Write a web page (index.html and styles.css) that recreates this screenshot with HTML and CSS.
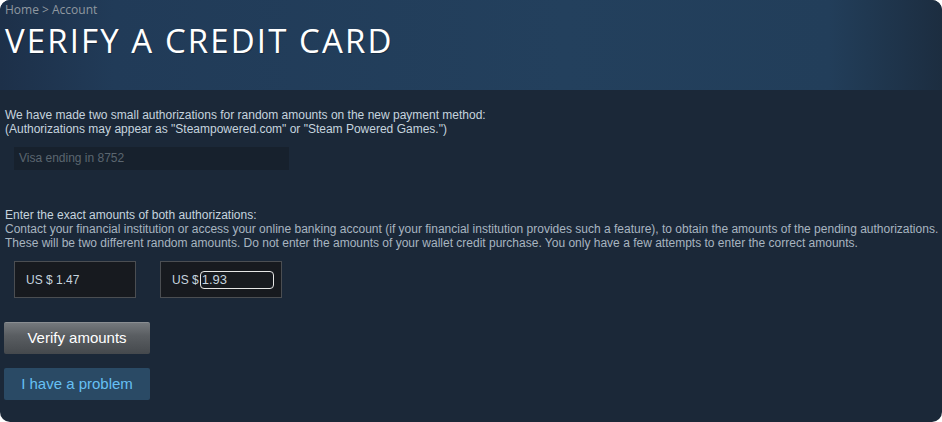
FILE: index.html
```html
<!DOCTYPE html>
<html>
<head>
<meta charset="utf-8">
<link rel="stylesheet" href="styles.css">
</head>
<body>
<div class="page">
  <div class="header">
    <div class="crumbs"><span>Home</span> &gt; <span>Account</span></div>
    <h1 class="title">VERIFY A CREDIT CARD</h1>
  </div>
  <div class="content">
    <p class="intro">We have made two small authorizations for random amounts on the new payment method:<br>(Authorizations may appear as "Steampowered.com" or "Steam Powered Games.")</p>
    <div class="card-field">Visa ending in 8752</div>
    <p class="instr"><span class="lead">Enter the exact amounts of both authorizations:</span><br>Contact your financial institution or access your online banking account (if your financial institution provides such a feature), to obtain the amounts of the pending authorizations.<br>These will be two different random amounts. Do not enter the amounts of your wallet credit purchase. You only have a few attempts to enter the correct amounts.</p>
    <div class="amounts">
      <div class="amount">US $ 1.47</div>
      <div class="amount">US $<span class="amount-input">1.93</span></div>
    </div>
    <div class="btn btn-verify">Verify amounts</div>
    <div class="btn btn-problem">I have a problem</div>
  </div>
</div>
</body>
</html>
```
FILE: styles.css
```css
html, body {
  margin: 0;
  padding: 0;
  background: #ffffff;
}
.page {
  width: 942px;
  height: 422px;
  background: #1b2838;
  border-radius: 10px;
  overflow: hidden;
  font-family: "Liberation Sans", Arial, sans-serif;
}
.header {
  height: 90px;
  background: linear-gradient(to right, #1d3049 0%, #213b58 12%, #23405d 60%, #223e5a 88%, #1c2d40 100%);
  box-sizing: border-box;
  padding: 2px 5px 0;
}
.crumbs {
  font-family: "Open Sans", sans-serif;
  font-size: 12px;
  line-height: 16px;
  color: #8f98a0;
}
.title {
  margin: 3px 0 0;
  font-family: "Open Sans", sans-serif;
  font-weight: 400;
  font-size: 33px;
  line-height: 40px;
  letter-spacing: 2.1px;
  color: #ffffff;
  text-shadow: 1px 1px 0 rgba(0,0,0,0.25);
}
.content {
  padding: 18px 0 0 5px;
  color: #c6d4df;
  font-size: 12px;
  line-height: 14px;
}
.intro {
  margin: 0;
}
.card-field {
  margin: 11px 0 0 9px;
  width: 275px;
  height: 23px;
  background: #17212d;
  color: #5b6670;
  font-size: 12px;
  line-height: 23px;
  padding-left: 5px;
  box-sizing: border-box;
}
.instr {
  margin: 38px 0 0;
  color: #a8b5c0;
  white-space: nowrap;
}
.instr .lead {
  color: #c6d4df;
}
.amounts {
  display: flex;
  gap: 24px;
  margin: 11px 0 0 9px;
}
.amount {
  width: 122px;
  height: 37px;
  box-sizing: border-box;
  border: 1px solid #4b4e52;
  background: #171a1f;
  color: #c6d4df;
  font-size: 12px;
  display: flex;
  align-items: center;
  padding-left: 11px;
}
.amount-input {
  display: inline-block;
  margin-left: 1px;
  width: 74px;
  height: 18px;
  box-sizing: border-box;
  border: 1px solid #e6e6e6;
  border-radius: 4px;
  line-height: 16px;
  padding-left: 1px;
  font-size: 13px;
}
.btn {
  width: 146px;
  height: 32px;
  margin-left: -1px;
  box-sizing: border-box;
  text-align: center;
  font-size: 15px;
  line-height: 32px;
  border-radius: 2px;
}
.btn-verify {
  margin-top: 24px;
  color: #ffffff;
  background: linear-gradient(to bottom, #75797d 0%, #5a5e62 40%, #45494d 100%);
  border-top: 1px solid #8a8e92;
  line-height: 30px;
}
.btn-problem {
  margin-top: 14px;
  color: #66c0f4;
  background: #2a4a65;
}
```
